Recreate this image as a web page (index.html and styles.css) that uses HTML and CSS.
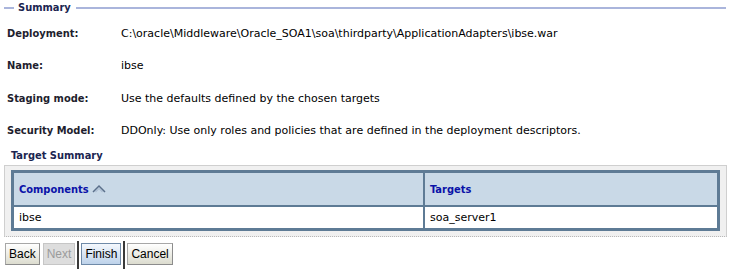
FILE: index.html
```html
<!DOCTYPE html>
<html lang="en">
<head>
    <meta charset="UTF-8">
    <title>Summary</title>
    <link rel="stylesheet" href="styles.css">
</head>
<body>
    <div class="page">
        <div class="legend">
            <span class="legend-line short"></span>
            <span class="legend-text">Summary</span>
            <span class="legend-line"></span>
        </div>

        <div class="props">
            <div class="prop">
                <span class="label">Deployment:</span>
                <span class="value">C:\oracle\Middleware\Oracle_SOA1\soa\thirdparty\ApplicationAdapters\ibse.war</span>
            </div>
            <div class="prop">
                <span class="label">Name:</span>
                <span class="value">ibse</span>
            </div>
            <div class="prop">
                <span class="label">Staging mode:</span>
                <span class="value">Use the defaults defined by the chosen targets</span>
            </div>
            <div class="prop last">
                <span class="label">Security Model:</span>
                <span class="value">DDOnly: Use only roles and policies that are defined in the deployment descriptors.</span>
            </div>
        </div>

        <h3 class="section-title">Target Summary</h3>
        <div class="table-box">
            <table class="grid">
                <thead>
                    <tr>
                        <th class="col-comp">Components
                            <svg class="sort" width="14" height="10" viewBox="0 0 14 10">
                                <path d="M1 8 L7 2 L13 8" fill="none" stroke="#5a6f8a" stroke-width="1.5"/>
                                <path d="M3.5 8 L7 4.5 L10.5 8" fill="none" stroke="#aebfd3" stroke-width="1.2"/>
                            </svg>
                        </th>
                        <th>Targets</th>
                    </tr>
                </thead>
                <tbody>
                    <tr>
                        <td>ibse</td>
                        <td>soa_server1</td>
                    </tr>
                </tbody>
            </table>
        </div>

        <div class="buttons">
            <button class="btn">Back</button>
            <button class="btn disabled">Next</button>
            <span class="sep"></span>
            <button class="btn primary">Finish</button>
            <span class="sep"></span>
            <button class="btn">Cancel</button>
        </div>
    </div>
</body>
</html>
```

FILE: styles.css
```css
body {
    margin: 0;
    background: #fff;
    font-family: "DejaVu Sans Condensed", "DejaVu Sans", sans-serif;
    font-size: 11px;
    color: #000;
}
.page {
    width: 731px;
}
.legend {
    display: flex;
    align-items: center;
    height: 15px;
    padding: 0 5px 0 4px;
}
.legend-line {
    flex: 1;
    height: 2px;
    background: #aab5dc;
}
.legend-line.short {
    flex: 0 0 10px;
}
.legend-text {
    font-weight: bold;
    color: #1b2550;
    padding: 0 5px 0 4px;
}
.props {
    padding: 12px 0 0 7px;
}
.prop {
    display: flex;
    height: 32.3px;
    align-items: flex-start;
}
.prop.last {
    height: 25px;
}
.label {
    width: 114px;
    font-weight: bold;
    color: #1e1e2e;
}
.value {
    font-family: "DejaVu Sans", sans-serif;
}
.section-title {
    margin: 0;
    padding: 0 0 0 11px;
    font-size: 11px;
    font-weight: bold;
    color: #1b2550;
    height: 15px;
}
.table-box {
    margin: 1px 4px 0 4px;
    background: #f0f0f0;
    border: 1px solid #cfcfcf;
    border-bottom: 1px dotted #b8b8b8;
    padding: 4px 6px 5px 6px;
}
.grid {
    width: 100%;
    border-collapse: collapse;
    border: 3px solid #5e7b95;
    background: #fff;
}
.grid th {
    background: #c9d9e7;
    color: #0a12a8;
    text-align: left;
    font-weight: bold;
    height: 31px;
    padding: 1px 6px 0 5px;
    border-top: 1px solid #fff;
    border-left: 1px solid #fff;
    border-bottom: 2px solid #5e7b95;
}
.grid th.col-comp {
    width: 398px;
    border-right: 2px solid #5e7b95;
}
.grid td {
    height: 21px;
    padding: 0 5px;
    font-family: "DejaVu Sans", sans-serif;
}
.grid td:first-child {
    border-right: 2px solid #5e7b95;
}
.sort {
    vertical-align: -1px;
}
.buttons {
    display: flex;
    align-items: flex-start;
    gap: 2px;
    padding: 4px 0 0 5px;
}
.btn {
    font-family: "Liberation Sans", Arial, sans-serif;
    font-size: 12px;
    height: 22px;
    margin-top: 2px;
    padding: 0 3px;
    color: #000;
    background: linear-gradient(#ffffff, #dcdccf);
    border: 1px solid #a7a7a7;
    border-right-color: #8c8c8c;
    border-bottom-color: #8c8c8c;
    border-radius: 0;
}
.btn + .btn {
    margin-left: 1px;
}
.btn.disabled {
    background: #dddddd;
    color: #9b9b9b;
    border-color: #c6c6c6;
}
.btn.primary {
    background: linear-gradient(#f4f8fd, #bdd2ea);
    border-color: #6f8aa8;
}
.sep {
    width: 2px;
    height: 28px;
    background: #3a3a3a;
}
```
